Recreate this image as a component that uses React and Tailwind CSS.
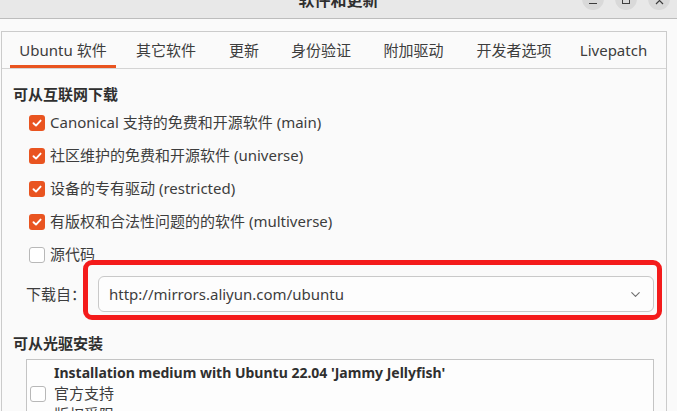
import { ChevronDown } from "lucide-react";
import React from "react";

const FONT = { fontFamily: '"Noto Sans", "Noto Sans CJK SC", sans-serif' };

const tabs = [
  { label: "Ubuntu 软件", w: "w-[106px]", active: true },
  { label: "其它软件", w: "w-[100px]" },
  { label: "更新", w: "w-[56px]" },
  { label: "身份验证", w: "w-[98px]" },
  { label: "附加驱动", w: "w-[87px]" },
  { label: "开发者选项", w: "w-[114px]" },
  { label: "Livepatch", w: "w-[85px]" },
];

const sources = [
  { label: "Canonical 支持的免费和开源软件 (main)", checked: true },
  { label: "社区维护的免费和开源软件 (universe)", checked: true },
  { label: "设备的专有驱动 (restricted)", checked: true },
  { label: "有版权和合法性问题的的软件 (multiverse)", checked: true },
  { label: "源代码", checked: false },
];

const Checkbox = ({ checked }) =>
  checked ? (
    <div className="w-4 h-4 shrink-0 rounded-[3px] bg-[#e95420] flex items-center justify-center">
      <svg width="12" height="12" viewBox="0 0 12 12" fill="none">
        <path
          d="M2.5 6.2 L5 8.6 L9.6 3.6"
          stroke="white"
          strokeWidth="1.9"
          strokeLinecap="round"
          strokeLinejoin="round"
        />
      </svg>
    </div>
  ) : (
    <div className="w-4 h-4 shrink-0 rounded-[3px] bg-white border border-[#b8b8b8]" />
  );

export default function App() {
  return (
    <div
      className="relative w-[677px] h-[411px] overflow-hidden bg-[#fafafa] text-[#3d3d3d]"
      style={FONT}
    >
      {/* title bar */}
      <div className="relative h-[19px] bg-[#e8e8e8] border-b border-[#bdbdbd] flex justify-center overflow-hidden">
        <div className="-mt-[10px] leading-[20px] text-[16px] font-bold text-[#2f2f2f]">
          软件和更新
        </div>
        <div className="absolute right-[7px] -top-[12px] flex gap-[11px]">
          <div className="w-[22px] h-[22px] rounded-full bg-[#d9d9d9] flex items-end justify-center pb-[6px]">
            <div className="w-[8px] h-px bg-[#3d3d3d]" />
          </div>
          <div className="w-[22px] h-[22px] rounded-full bg-[#d9d9d9] flex items-end justify-center pb-[6px]">
            <div className="w-[8px] h-[8px] border border-[#3d3d3d]" />
          </div>
          <div className="w-[22px] h-[22px] rounded-full bg-[#d9d9d9] flex items-end justify-center pb-[5px]">
            <svg width="9" height="9" viewBox="0 0 9 9">
              <path d="M1 1 L8 8 M8 1 L1 8" stroke="#3d3d3d" strokeWidth="1.2" />
            </svg>
          </div>
        </div>
      </div>

      <div className="h-[12px]" />

      {/* notebook */}
      <div className="ml-px w-[666px] h-[400px] border border-[#cbcbcb] bg-[#fafafa]">
        <div className="flex h-[37px] pl-[8px] border-b border-[#d4d4d4]">
          {tabs.map((t) => (
            <div key={t.label} className={`${t.w} flex flex-col`}>
              <div className="h-[33px] flex items-end justify-center text-[15px] leading-[24px] pb-[3px]">
                {t.label}
              </div>
              <div className={`h-[3px] ${t.active ? "bg-[#e95420]" : ""}`} />
            </div>
          ))}
        </div>

        <div className="pl-[11px] pr-[12px] pt-[15px]">
          <div className="h-[20px] leading-[20px] text-[15px] font-bold text-[#2f2f2f]">
            可从互联网下载
          </div>
          <div className="mt-[2px]">
            {sources.map((s) => (
              <div key={s.label} className="h-[33px] flex items-center gap-[5px] pl-[16px] text-[15px]">
                <Checkbox checked={s.checked} />
                <span>{s.label}</span>
              </div>
            ))}
          </div>

          <div className="mt-[5px] flex items-center h-[36px]">
            <div className="w-[85px] pl-[13px] text-[15px]">下载自：</div>
            <div className="flex-1 h-[36px] rounded-[6px] border border-[#c9c9c9] bg-[#fdfdfd] flex items-center justify-between pl-[10px] pr-[10px] text-[15px]">
              <span>http://mirrors.aliyun.com/ubuntu</span>
              <ChevronDown size={15} strokeWidth={1.8} className="text-[#6f6f6f]" />
            </div>
          </div>

          <div className="mt-[21px] h-[20px] leading-[20px] text-[15px] font-bold text-[#2f2f2f]">
            可从光驱安装
          </div>
          <div className="mt-[6px] ml-[13px] h-[80px] border border-[#c4c4c4] bg-[#fdfdfd] pt-[2px] pl-[3px]">
            <div className="flex items-center gap-[8px]">
              <Checkbox checked={false} />
              <div className="text-[15px] leading-[21px]">
                <div className="font-bold text-[14px] text-[#2f2f2f]">
                  Installation medium with Ubuntu 22.04 'Jammy Jellyfish'
                </div>
                <div>官方支持</div>
                <div>版权受限</div>
              </div>
            </div>
          </div>
        </div>
      </div>

      {/* red highlight annotation */}
      <div className="absolute left-[83px] top-[260px] w-[579px] h-[60px] border-[5px] border-[#f41b1b] rounded-[9px]" />
    </div>
  );
}
